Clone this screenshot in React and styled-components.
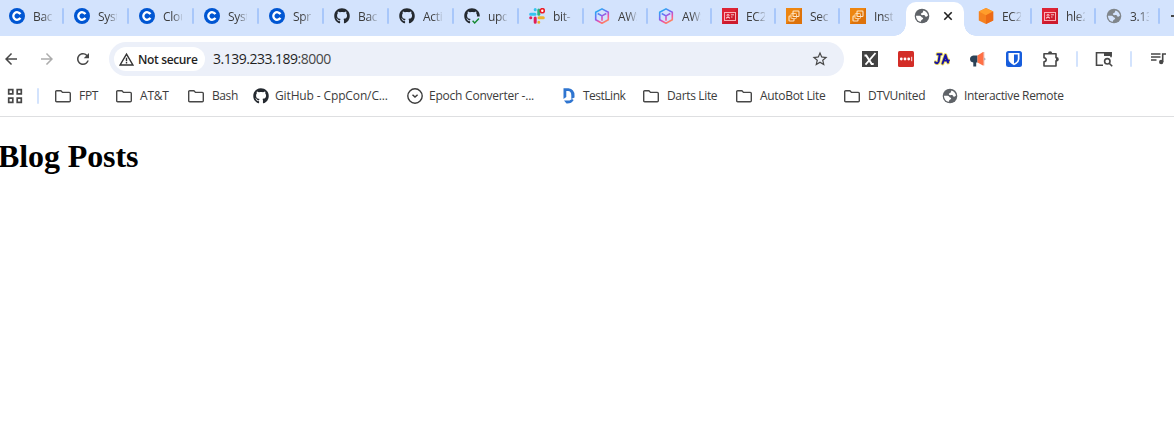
import React from "react";
import styled, { createGlobalStyle, css } from "styled-components";
import { FaGithub } from "react-icons/fa";
import {
  MdArrowBack,
  MdArrowForward,
  MdRefresh,
  MdStarBorder,
} from "react-icons/md";

const Global = createGlobalStyle`
  * { box-sizing: border-box; }
  html, body { margin: 0; background: #fff; overflow: hidden; }
  body { font-family: "Open Sans", "Noto Sans", sans-serif; color: #1f1f1f; }
  svg { display: block; flex: none; }
`;

const Window = styled.div`
  width: 1174px;
  height: 434px;
  overflow: hidden;
  background: #fff;
`;

const TabStrip = styled.div`
  display: flex;
  height: 36px;
  background: #d3e3fd;
  overflow: hidden;
`;

const TabCell = styled.div`
  position: relative;
  display: flex;
  flex: none;
  align-items: center;
  width: ${(p) => p.$width}px;
  height: 32px;
  padding-left: 9px;
  ${(p) =>
    p.$divided &&
    css`
      &::after {
        content: "";
        position: absolute;
        right: 1px;
        top: 8px;
        width: 2px;
        height: 16px;
        border-radius: 1px;
        background: #a8c7fa;
      }
    `}
`;

const TabTitle = styled.span`
  width: 19px;
  margin: 2px 0 0 8px;
  overflow: hidden;
  white-space: nowrap;
  font-size: 12px;
  line-height: 18px;
  letter-spacing: -0.3px;
  color: #3c3c3c;
  mask-image: linear-gradient(to right, #000 50%, rgba(0, 0, 0, 0.15) 100%);
`;

const ActiveTab = styled.div`
  position: relative;
  display: flex;
  flex: none;
  align-items: center;
  width: 58px;
  height: 34px;
  margin: 2px 5px 0 1px;
  padding: 0 11px 6px 8px;
  justify-content: space-between;
  border-radius: 10px 10px 0 0;
  background: #fff;
  &::before,
  &::after {
    content: "";
    position: absolute;
    bottom: 0;
    width: 12px;
    height: 12px;
  }
  &::before {
    left: -12px;
    background: radial-gradient(circle at 0 0, transparent 11.5px, #fff 12px);
  }
  &::after {
    right: -12px;
    background: radial-gradient(circle at 100% 0, transparent 11.5px, #fff 12px);
  }
`;

const NewTab = styled.span`
  width: 10px;
  height: 2px;
  margin: 15px 0 0 10px;
  flex: none;
  background: #474747;
`;

const Toolbar = styled.div`
  display: flex;
  align-items: center;
  height: 46px;
  color: #474747;
`;

const NavButtons = styled.div`
  display: flex;
  align-items: center;
  width: 109px;
  padding-left: 2px;
  gap: 18px;
`;

const AddressBar = styled.div`
  display: flex;
  align-items: center;
  width: 735px;
  height: 34px;
  padding: 0 15px 0 5px;
  border-radius: 17px;
  background: #ecf0f9;
`;

const SecurityChip = styled.div`
  display: flex;
  align-items: center;
  width: 91px;
  height: 24px;
  padding-left: 5px;
  gap: 4px;
  border-radius: 12px;
  background: #fff;
  color: #1f1f1f;
  font-size: 12px;
  font-weight: 600;
  letter-spacing: -0.35px;
  white-space: nowrap;
`;

const Address = styled.div`
  flex: 1;
  margin-left: 8px;
  font-size: 14px;
  line-height: 20px;
  letter-spacing: -0.5px;
  color: #474747;
  b {
    font-weight: 400;
    color: #1f1f1f;
  }
`;

const Extensions = styled.div`
  display: flex;
  align-items: center;
  gap: 20px;
  margin-left: 18px;
`;

const Divider = styled.span`
  flex: none;
  width: 2px;
  height: 16px;
  border-radius: 1px;
  background: #d3e3fd;
  margin: ${(p) => p.$margin || "0"};
`;

const BookmarksBar = styled.div`
  display: flex;
  align-items: center;
  height: 35px;
  padding: 0 0 6px 7px;
  border-bottom: 1px solid #dedfe1;
  color: #3c3c3c;
`;

const BookmarkItem = styled.div`
  display: flex;
  flex: none;
  align-items: center;
  width: ${(p) => p.$width}px;
  gap: ${(p) => p.$gap}px;
  font-size: 12px;
  line-height: 18px;
  letter-spacing: ${(p) => p.$spacing}px;
  white-space: nowrap;
`;

const Page = styled.main`
  height: 317px;
  padding-top: 21px;
`;

const Heading = styled.h1`
  margin: 0 0 0 -2px;
  font: bold 32px/37px "Liberation Serif", "Times New Roman", serif;
  letter-spacing: -0.1px;
  color: #000;
`;

const Icon = ({ size = 16, box = 16, children }) => (
  <svg width={size} height={size} viewBox={`0 0 ${box} ${box}`} fill="none">
    {children}
  </svg>
);

const Coursera = () => (
  <Icon>
    <circle cx="8" cy="8" r="8" fill="#0056d2" />
    <path d="M11.4 6.1A3.8 3.8 0 1 0 11.4 9.9" stroke="#fff" strokeWidth="2.3" />
  </Icon>
);

const GitHubMark = () => <FaGithub size={16} color="#24292f" />;

const GitHubPassed = () => (
  <Icon>
    <FaGithub size={16} color="#24292f" />
    <path d="M7.5 16L7 11.5 11 8.5H16V16Z" fill="#d3e3fd" />
    <path d="M8.6 12.7l2.1 2.2 4.2-4.3" stroke="#168a32" strokeWidth="1.5" />
  </Icon>
);

const Slack = () => (
  <Icon>
    <g strokeWidth="3" strokeLinecap="round">
      <path d="M1.6 6.3H6M6.2 1.6v.2" stroke="#36c5f0" />
      <path d="M9.8 2v4.2" stroke="#2eb67d" />
      <path d="M10 9.8h4.3M9.8 14.2v.1" stroke="#ecb22e" />
      <path d="M6.2 10v4.3M1.7 9.8h.1" stroke="#e01e5a" />
    </g>
    <circle cx="13.3" cy="2.7" r="2" fill="#fff" stroke="#eb1c26" strokeWidth="1.6" />
  </Icon>
);

const AwsCube = () => (
  <Icon>
    <defs>
      <linearGradient id="cube" x1="3" y1="1" x2="12" y2="15" gradientUnits="userSpaceOnUse">
        <stop stopColor="#12bdf2" />
        <stop offset=".45" stopColor="#7a65f5" />
        <stop offset=".7" stopColor="#f24fa5" />
        <stop offset="1" stopColor="#ff9552" />
      </linearGradient>
    </defs>
    <path
      d="M8 .9l6.3 3.4v7.4L8 15.2l-6.3-3.5V4.3zM3.7 5.5L8 7.9l4.3-2.4M8 8v4.8"
      stroke="url(#cube)"
      strokeWidth="1.6"
      strokeLinejoin="round"
    />
  </Icon>
);

const RedCard = () => (
  <Icon>
    <path d="M0 0h16v16H0z" fill="#dd2435" />
    <path d="M16 0v16H0z" fill="#bd1228" opacity=".5" />
    <rect x="2.5" y="4.5" width="11" height="8" stroke="#f9b0b7" />
    <circle cx="6" cy="7.3" r="1" stroke="#fbd5d8" strokeWidth=".9" />
    <path d="M4.5 10.5V9.5h3v1M9 6.8h3M9 9h1.500" stroke="#fbd5d8" strokeWidth=".9" />
  </Icon>
);

const OrangeInstance = () => (
  <Icon>
    <path d="M0 0h16v16H0z" fill="#ed8510" />
    <path d="M16 0v16H0z" fill="#cf6206" opacity=".55" />
    <rect x="7" y="3" width="6" height="5.5" rx=".8" stroke="#fde6c8" strokeWidth="1.1" />
    <rect x="5" y="5.5" width="5.5" height="5" rx=".8" stroke="#fde6c8" strokeWidth=".8" />
    <path d="M4.8 8H3.800q-.8 0-.8.8v3.400q0 .8.800.8h3.400q.8 0 .8-.8V11" stroke="#fde6c8" strokeWidth="1.1" />
  </Icon>
);

const OrangeCube = () => (
  <Icon>
    <path d="M8 0l7.2 3.6v8.8L8 16 .8 12.4V3.6z" fill="#f58220" />
    <path d="M8 0l7.2 3.6L8 7.2.8 3.6z" fill="#ff9d2b" />
    <path d="M8 7.2l7.2-3.6v8.8L8 16z" fill="#ec6a16" />
  </Icon>
);

const Globe = ({ color = "#5f6368", back = "#fff" }) => (
  <Icon>
    <circle cx="8" cy="8" r="7.3" fill={color} />
    <path
      d="M9.5 2.4c2.500.6 4.300 2.700 4.500 5.200-.7.9-1.400 1.400-2.200 1.100-.7-.3-.5-1.300-1.300-1.500-1.200-.3-2.900.3-3.500-.6-.4-.7.200-1.400 1-1.600 1-.2.600-1.400 1.500-2.600z"
      fill={back}
    />
    <path
      d="M2 7.7h3.6c1.4 0 1.6 1.5 2.4 1.7 1.3.3 1.4 1.3.7 1.9-.7.5-1.7.4-1.8 2.5C4.2 13.4 2 11.2 2 7.7z"
      fill={back}
    />
  </Icon>
);

const CloseMark = () => (
  <Icon size={10} box={10}>
    <path d="M1.3 1.3l7.400 7.400M8.7 1.3L1.3 8.7" stroke="#1f1f1f" strokeWidth="1.6" />
  </Icon>
);

const Warning = () => (
  <Icon size={15}>
    <path d="M8 2.3L14.8 13.8H1.2z" stroke="#333" strokeWidth="1.5" strokeLinejoin="miter" />
    <path d="M8 6v3.8M8 10.7v1.6" stroke="#333" strokeWidth="1.5" />
  </Icon>
);

const Folder = () => (
  <Icon>
    <path
      d="M1.7 2.7h4.2l1.6 1.7h6.8q1 0 1 1v7.4q0 .9-1 .9H1.7q-1 0-1-.9V3.6q0-.9 1-.9z"
      stroke="#474747"
      strokeWidth="1.4"
    />
  </Icon>
);

const Apps = () => (
  <Icon>
    <path
      d="M1.7 1.7h4.1v4.1h-4.1zM10.2 1.7h4.1v4.1h-4.1zM1.7 10.2h4.1v4.1h-4.1zM10.2 10.2h4.1v4.1h-4.1z"
      stroke="#474747"
      strokeWidth="1.7"
    />
  </Icon>
);

const EpochClock = () => (
  <Icon>
    <circle cx="8" cy="8" r="7.2" stroke="#3c3c3c" strokeWidth="1.4" />
    <path d="M5.5 6.8L8 9l2.6-2.2" stroke="#3c3c3c" strokeWidth="1.5" />
  </Icon>
);

const TestLinkMark = () => (
  <Icon>
    <path d="M2.5 .3H7.5Q13.5 1 13.5 7.5V9.5L10.3 11V7.5Q10.3 3 7 3H5.3V9L2.5 11z" fill="#2f75d0" />
    <path d="M3 12.5h5.5l2.5-1.5 1.7 1Q10.5 15.8 5.5 15.5z" fill="#2f75d0" />
  </Icon>
);

const XExtension = () => (
  <Icon>
    <path d="M0 0h16v16H0z" fill="#424242" />
    <path d="M2.5 4.5h1.7l5.5 8.5h2" stroke="#fff" strokeWidth="2.1" />
    <path d="M13.5 2L3.5 13.7" stroke="#fff" strokeWidth="1.8" />
  </Icon>
);

const LastPass = () => (
  <Icon>
    <rect width="16" height="16" rx="1.5" fill="#d32d27" />
    <circle cx="3.3" cy="8" r="1.4" fill="#fff" />
    <circle cx="7" cy="8" r="1.4" fill="#fff" />
    <circle cx="10.7" cy="8" r="1.4" fill="#fff" />
    <path d="M13.7 5.8v4.4" stroke="#fff" strokeWidth=".9" />
  </Icon>
);

const jaStrokes =
  "M3.5 3.2h3.800M5.8 3.2L4.6 10.500Q3.500 13.500 1.300 11.200M8.500 12.500l3-8.500 2.500 7.500M9.500 9.500h5.300";

const JaExtension = () => (
  <Icon>
    <g strokeLinecap="round" strokeLinejoin="round">
      <path d={jaStrokes} stroke="#f1df55" strokeWidth="3.8" />
      <path d={jaStrokes} stroke="#1712a5" strokeWidth="2" />
    </g>
  </Icon>
);

const Megaphone = () => (
  <Icon>
    <path d="M7.5 4.5v7H6.2v4H3.3v-4Q0 11 0 8t3.3-3.5z" fill="#2b4257" />
    <path d="M7.5 4.5L13 1v13.5l-5.5-3z" fill="#ff7045" />
    <path d="M13 1h1.3v13.5H13z" fill="#f4a08a" />
    <path d="M14.7 6.5q1.3 1.5 0 3z" fill="#2b4257" />
  </Icon>
);

const Bitwarden = () => (
  <Icon>
    <rect width="16" height="16" rx="2.5" fill="#175ddc" />
    <path d="M2.5 2h11v6q0 3.5-5.5 6.3-5.5-2.8-5.5-6.3z" fill="#fff" />
    <path d="M8 3.5h3.8V8q0 2.5-3.8 4.5z" fill="#175ddc" />
  </Icon>
);

const Puzzle = () => (
  <Icon size={18} box={18}>
    <path
      d="M2 3.8h12v4h.5a1.5 1.5 0 0 1 0 3H14v5.2H2v-4.2q2.2-.3 2.2-2T2 7.8z"
      stroke="#474747"
      strokeWidth="1.6"
      strokeLinejoin="round"
    />
    <path d="M6 3.5a2.1 2.3 0 0 1 4.2 0zM14 7.5a2.2 2 0 0 1 0 4z" fill="#474747" />
  </Icon>
);

const SidePanelSearch = () => (
  <Icon size={18} box={18}>
    <path d="M8 15.2H1.5V2.8H16v4.5" stroke="#474747" strokeWidth="1.6" />
    <path d="M9 2h7.8V6H9z" fill="#474747" />
    <circle cx="12.3" cy="11.3" r="2.7" stroke="#474747" strokeWidth="1.6" />
    <path d="M14.2 13.2l3 3" stroke="#474747" strokeWidth="1.6" />
  </Icon>
);

const MediaQueue = () => (
  <Icon>
    <path d="M1 3h9.5M1 6h9.5M1 9h5.5" stroke="#474747" strokeWidth="1.6" />
    <path d="M12.7 11V3H16" stroke="#474747" strokeWidth="1.6" />
    <circle cx="11.2" cy="11" r="2.2" fill="#474747" />
  </Icon>
);

const tabsBefore = [
  [Coursera, "Back"],
  [Coursera, "Syst"],
  [Coursera, "Clou"],
  [Coursera, "Syst"],
  [Coursera, "Sprin"],
  [GitHubMark, "Back"],
  [GitHubMark, "Actio"],
  [GitHubPassed, "upda"],
  [Slack, "bit-"],
  [AwsCube, "AWS"],
  [AwsCube, "AWS"],
  [RedCard, "EC2"],
  [OrangeInstance, "Secu"],
  [OrangeInstance, "Insta"],
];

const GreyGlobe = () => <Globe color="#80868b" back="#d3e3fd" />;

const tabsAfter = [
  [OrangeCube, "EC2"],
  [RedCard, "hle2"],
  [GreyGlobe, "3.13"],
];

const bookmarks = [
  [Folder, "FPT", 61, 8, -0.3],
  [Folder, "AT&T", 72, 8, -0.2],
  [Folder, "Bash", 65, 8, -0.4],
  [GitHubMark, "GitHub - CppCon/C...", 154, 6, -0.13],
  [EpochClock, "Epoch Converter -...", 154, 6, -0.23],
  [TestLinkMark, "TestLink", 82, 6, -0.5],
  [Folder, "Darts Lite", 93, 8, -0.35],
  [Folder, "AutoBot Lite", 108, 8, -0.3],
  [Folder, "DTVUnited", 98, 8, -0.3],
  [Globe, "Interactive Remote", 130, 6, -0.34],
];

const Tab = ({ icon: Mark, title, width, divided }) => (
  <TabCell $width={width} $divided={divided}>
    <Mark />
    <TabTitle>{title}</TabTitle>
  </TabCell>
);

export default function App() {
  return (
    <Window>
      <Global />
      <TabStrip>
        {tabsBefore.map(([icon, title], i) => (
          <Tab key={i} icon={icon} title={title} width={i < 9 ? 65 : 64} divided={i < 13} />
        ))}
        <ActiveTab>
          <Globe />
          <CloseMark />
        </ActiveTab>
        {tabsAfter.map(([icon, title], i) => (
          <Tab key={i} icon={icon} title={title} width={64} divided />
        ))}
        <NewTab />
      </TabStrip>
      <Toolbar>
        <NavButtons>
          <MdArrowBack size={18} />
          <MdArrowForward size={18} color="#acacac" />
          <MdRefresh size={18} />
        </NavButtons>
        <AddressBar>
          <SecurityChip>
            <Warning />
            Not secure
          </SecurityChip>
          <Address>
            <b>3.139.233.189</b>:8000
          </Address>
          <MdStarBorder size={18} />
        </AddressBar>
        <Extensions>
          <XExtension />
          <LastPass />
          <JaExtension />
          <Megaphone />
          <Bitwarden />
          <Puzzle />
          <Divider $margin="0 -3px 0 -4px" />
          <SidePanelSearch />
          <Divider $margin="0 -2px 0 -3px" />
          <MediaQueue />
        </Extensions>
      </Toolbar>
      <BookmarksBar>
        <Apps />
        <Divider $margin="0 16px 0 14px" />
        {bookmarks.map(([Mark, title, width, gap, spacing]) => (
          <BookmarkItem key={title} $width={width} $gap={gap} $spacing={spacing}>
            <Mark />
            <span>{title}</span>
          </BookmarkItem>
        ))}
      </BookmarksBar>
      <Page>
        <Heading>Blog Posts</Heading>
      </Page>
    </Window>
  );
}
